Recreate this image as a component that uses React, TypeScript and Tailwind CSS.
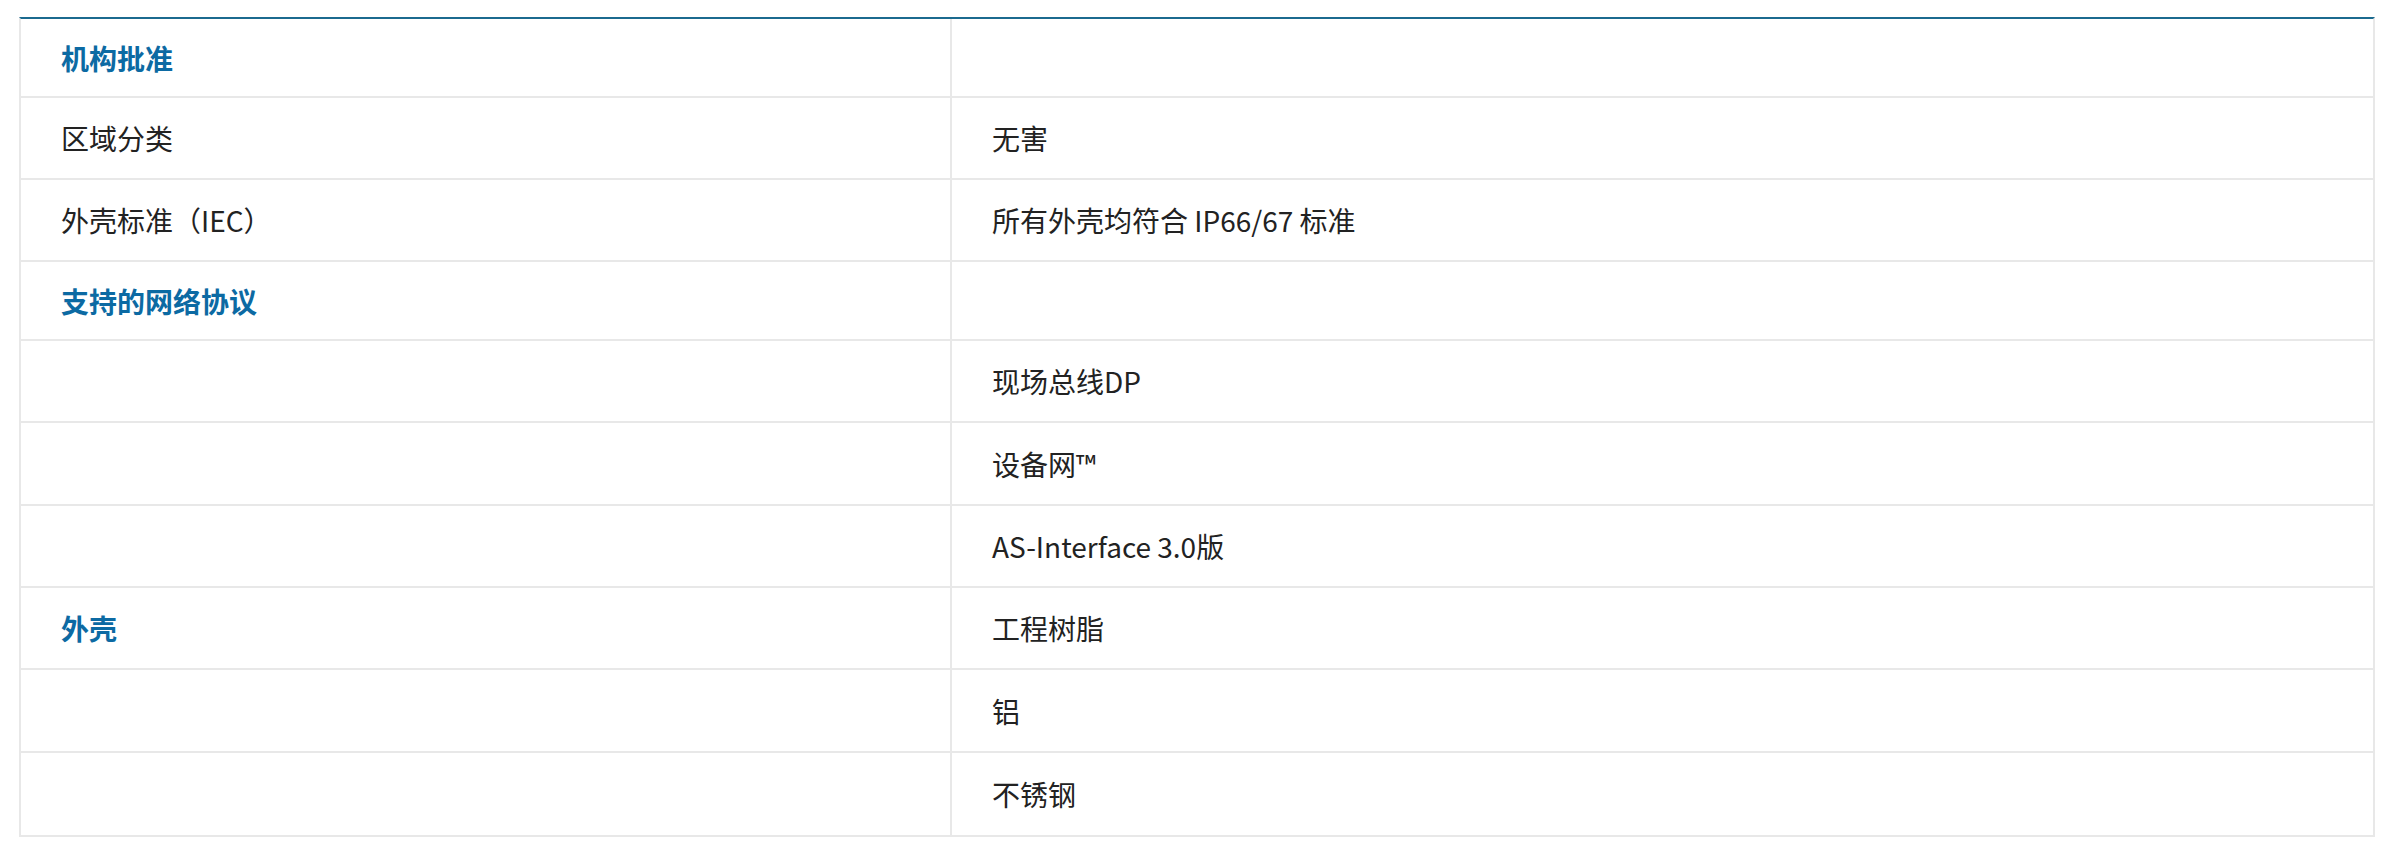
import React from 'react'

type Row = {
  label?: string
  value?: string
  heading?: boolean
  h: string
}

const rows: Row[] = [
  { label: '机构批准', heading: true, h: 'h-[79px]' },
  { label: '区域分类', value: '无害', h: 'h-[82px]' },
  { label: '外壳标准（IEC）', value: '所有外壳均符合 IP66/67 标准', h: 'h-[82px]' },
  { label: '支持的网络协议', heading: true, h: 'h-[79px]' },
  { value: '现场总线DP', h: 'h-[82px]' },
  { value: '设备网™', h: 'h-[83px]' },
  { value: 'AS-Interface 3.0版', h: 'h-[82px]' },
  { label: '外壳', value: '工程树脂', heading: true, h: 'h-[82px]' },
  { value: '铝', h: 'h-[83px]' },
  { value: '不锈钢', h: 'h-[82px]' },
]

export default function App() {
  return (
    <div
      className="min-h-screen bg-white pt-[17px] pl-[19px] pr-[12px]"
      style={{ fontFamily: '"Noto Sans CJK SC", "Noto Sans", sans-serif' }}
    >
      <div className="border-x-2 border-b-2 border-t-2 border-[#e8e8e8] border-t-[#1b6a8f]">
        {rows.map((row, i) => (
          <div
            key={i}
            className={`grid grid-cols-[931px_1fr] ${row.h} ${
              i < rows.length - 1 ? 'border-b-2 border-[#e8e8e8]' : ''
            }`}
          >
            {/* label cell */}
            <div className="flex items-center border-r-2 border-[#e8e8e8] px-[40px]">
              {row.label && (
                <span
                  className={`text-[28px] leading-none ${
                    row.heading ? 'font-bold text-[#0c6aa3]' : 'text-[#222]'
                  }`}
                >
                  {row.label}
                </span>
              )}
            </div>
            {/* value cell */}
            <div className="flex items-center px-[40px]">
              {row.value && (
                <span className="text-[28px] leading-none text-[#222]">{row.value}</span>
              )}
            </div>
          </div>
        ))}
      </div>
    </div>
  )
}
